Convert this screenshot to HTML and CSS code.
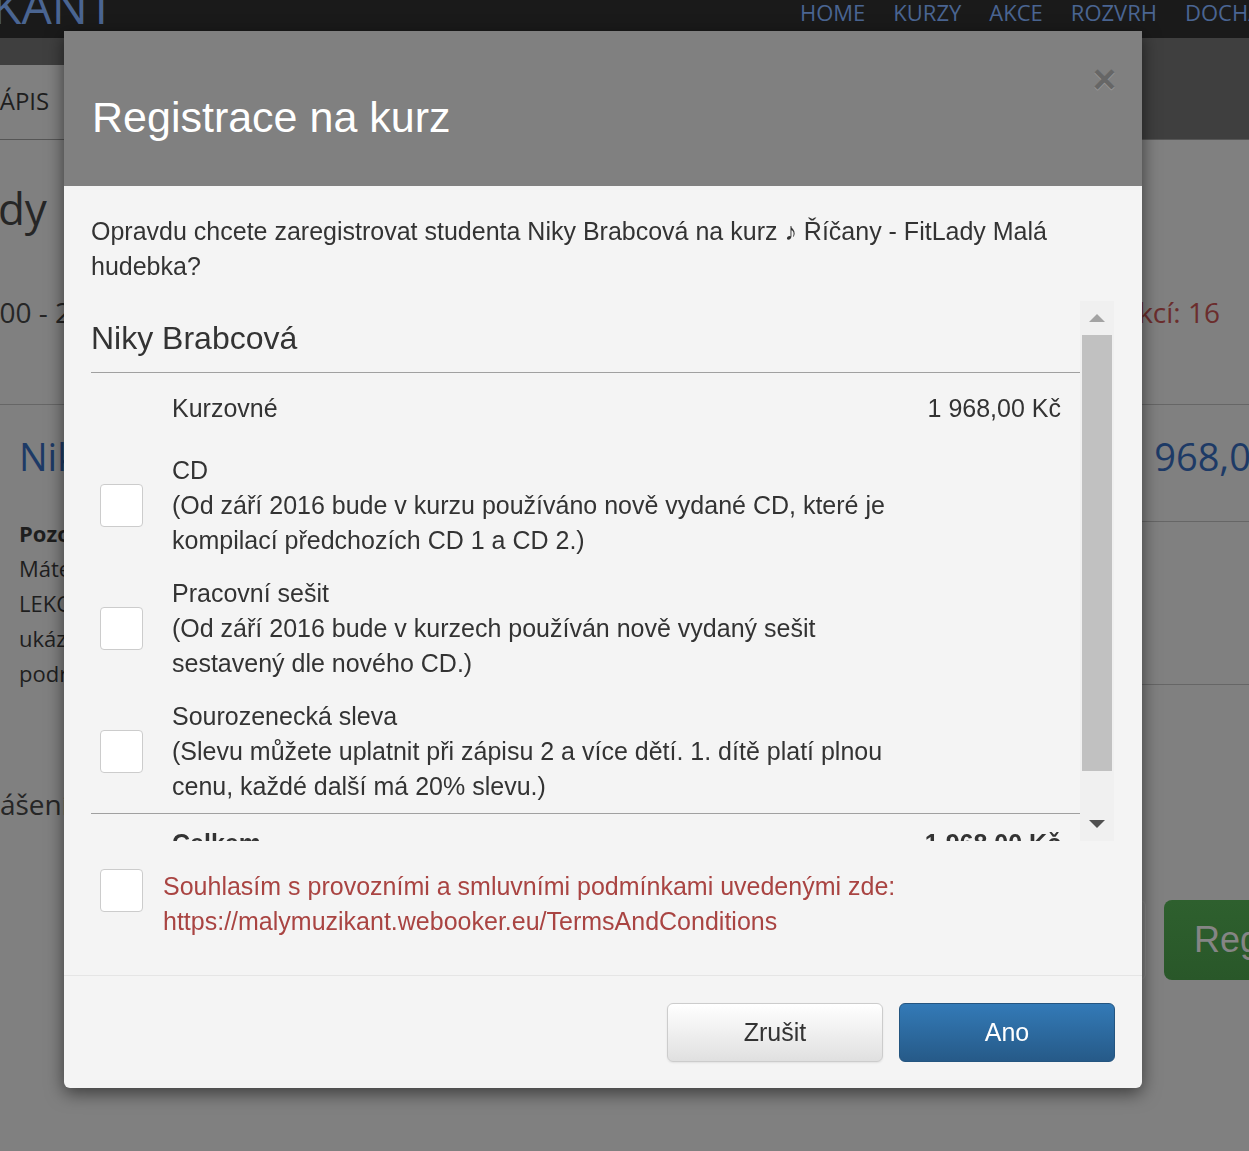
FILE: index.html
```html
<!DOCTYPE html>
<html lang="cs">
<head>
  <meta charset="UTF-8" />
  <title>Registrace na kurz</title>
  <link rel="stylesheet" href="styles.css">
</head>
<body>
  <div class="page">
    <header class="topbar">
      <div class="logo">KANT</div>
      <nav class="mainnav">
        <a>HOME</a>
        <a>KURZY</a>
        <a>AKCE</a>
        <a>ROZVRH</a>
        <a>DOCHÁZKA</a>
      </nav>
    </header>
    <div class="subbar">
      <a class="tab">ZÁPIS</a>
    </div>
    <main class="content">
      <h1 class="course-name">FitLady</h1>
      <div class="course-meta">
        <span class="time">10:00 - 20:00</span>
        <span class="lessons">Počet lekcí: 16</span>
      </div>
      <div class="student-row">
        <span class="student">Niky Brabcová</span>
        <span class="student-price">1 968,00 Kč</span>
      </div>
      <div class="info-row">
        <div class="info">
          <b>Pozor</b><br>
          Máte<br>
          LEKCE<br>
          ukázka<br>
          podrobnosti
        </div>
        <div class="info-side"></div>
      </div>
      <div class="signup-row">
        <span class="signed">přihlášení</span>
      </div>
      <div class="action-row">
        <span class="btn-ghost"></span>
        <span class="btn-success">Registrovat</span>
      </div>
    </main>
  </div>

  <div class="modal">
    <div class="modal-header">
      <h2 class="modal-title">Registrace na kurz</h2>
      <button class="close">×</button>
    </div>

    <div class="modal-body">
      <p class="intro">Opravdu chcete zaregistrovat studenta Niky Brabcová na kurz ♪ Říčany - FitLady Malá hudebka?</p>

      <div class="scroll-box">
        <div class="scroll-view">
          <h3 class="student-name">Niky Brabcová</h3>
          <div class="items">
            <div class="item first">
              <div class="cell-check"></div>
              <div class="cell-text">Kurzovné</div>
              <div class="cell-price">1 968,00 Kč</div>
            </div>
            <div class="item">
              <div class="cell-check"><span class="checkbox"></span></div>
              <div class="cell-text">CD<br>(Od září 2016 bude v kurzu používáno nově vydané CD, které je kompilací předchozích CD 1 a CD 2.)</div>
              <div class="cell-price"></div>
            </div>
            <div class="item">
              <div class="cell-check"><span class="checkbox"></span></div>
              <div class="cell-text">Pracovní sešit<br>(Od září 2016 bude v kurzech používán nově vydaný sešit sestavený dle nového CD.)</div>
              <div class="cell-price"></div>
            </div>
            <div class="item">
              <div class="cell-check"><span class="checkbox"></span></div>
              <div class="cell-text">Sourozenecká sleva<br>(Slevu můžete uplatnit při zápisu 2 a více dětí. 1. dítě platí plnou cenu, každé další má 20% slevu.)</div>
              <div class="cell-price"></div>
            </div>
            <div class="item total">
              <div class="cell-check"></div>
              <div class="cell-text">Celkem</div>
              <div class="cell-price">1 968,00 Kč</div>
            </div>
          </div>
        </div>
        <div class="scrollbar">
          <div class="sb-btn"><span class="arrow-up"></span></div>
          <div class="sb-track"><div class="sb-thumb"></div></div>
          <div class="sb-btn"><span class="arrow-down"></span></div>
        </div>
      </div>

      <div class="terms">
        <span class="checkbox"></span>
        <p>Souhlasím s provozními a smluvními podmínkami uvedenými zde:<br>https://malymuzikant.webooker.eu/TermsAndConditions</p>
      </div>
    </div>

    <div class="modal-footer">
      <button class="btn btn-default">Zrušit</button>
      <button class="btn btn-primary">Ano</button>
    </div>
  </div>
</body>
</html>
```

FILE: styles.css
```css
body {
  margin: 0;
  background: #808080;
  font-family: 'Open Sans', sans-serif;
  overflow: hidden;
  height: 1151px;
}

/* page behind the dialog (already dimmed) */
.topbar {
  display: grid;
  grid-template-columns: 800px 1fr;
  height: 38px;
  background: #1a1a1a;
  overflow: hidden;
  white-space: nowrap;
}
.logo {
  font-size: 48px;
  line-height: 1;
  margin: -18px 0 0 -8px;
  color: #4a6592;
}
.mainnav {
  display: flex;
  gap: 28px;
  padding-top: 1px;
}
.mainnav a {
  font-size: 22px;
  line-height: 1;
  color: #4a6592;
}
.subbar {
  height: 101px;
  background: #3f3f3f;
  border-bottom: 1px solid #555;
  display: flex;
  align-items: flex-end;
}
.tab {
  height: 74px;
  line-height: 72px;
  margin-left: -30px;
  padding: 0 40px 0 16px;
  background: #808080;
  font-size: 24px;
  color: #1e1e1e;
}
.content {
  color: #262626;
}
.course-name {
  margin: 38px 0 0 -99px;
  font-size: 44px;
  font-weight: normal;
  line-height: 60px;
}
.course-meta {
  display: flex;
  justify-content: space-between;
  margin-top: 54px;
  padding: 0 29px 0 0;
  font-size: 28px;
  line-height: 40px;
  height: 112px;
  border-bottom: 1px solid #666;
}
.time {
  margin-left: -40px;
}
.lessons {
  color: #6b2d2d;
}
.student-row {
  display: flex;
  justify-content: space-between;
  padding: 26px 0 0 19px;
  font-size: 38px;
  line-height: 50px;
  color: #1d3a66;
  white-space: nowrap;
  overflow: hidden;
}
.student-price {
  margin-right: -75px;
}
.info-row {
  display: flex;
  margin-top: 24px;
}
.info {
  flex: 1;
  padding: 11px 0 0 19px;
  font-size: 22px;
  line-height: 35px;
  color: #1e1e1e;
}
.info-side {
  width: 107px;
  height: 162px;
  border-top: 1px solid #666;
  border-bottom: 1px solid #666;
  margin-top: 16px;
}
.signed {
  display: block;
  margin: 93px 0 0 -60px;
  font-size: 28px;
  line-height: 40px;
}
.action-row {
  display: flex;
  justify-content: flex-end;
  margin-top: 76px;
  margin-right: -235px;
  gap: 18px;
}
.btn-ghost {
  width: 60px;
  height: 78px;
  border: 1px solid #8a8a8a;
  border-radius: 6px;
}
.btn-success {
  width: 290px;
  height: 80px;
  line-height: 80px;
  padding-left: 30px;
  border-radius: 8px;
  background: linear-gradient(#2e602e, #295729);
  font-family: 'Liberation Sans', Arial, sans-serif;
  font-size: 36px;
  color: #858585;
}

/* dialog */
.modal {
  position: fixed;
  top: 31px;
  left: 64px;
  width: 1078px;
  background: #f4f4f4;
  border-radius: 0 0 6px 6px;
  box-shadow: 0 5px 18px rgba(0,0,0,0.55);
  font-family: 'Liberation Sans', Arial, sans-serif;
  color: #333;
}
.modal-header {
  position: relative;
  background: #808080;
  padding: 60px 28px 42px;
}
.modal-title {
  margin: 0;
  font-size: 43px;
  font-weight: normal;
  line-height: 53px;
  color: #fff;
}
.close {
  position: absolute;
  top: 28px;
  right: 26px;
  padding: 0;
  border: none;
  background: none;
  font-family: 'Liberation Sans', Arial, sans-serif;
  font-size: 40px;
  font-weight: bold;
  line-height: 1;
  color: #000;
  opacity: 0.2;
  text-shadow: 0 1px 0 #fff;
}
.modal-body {
  padding: 28px 28px 36px 27px;
}
.intro {
  margin: 0;
  font-size: 25px;
  line-height: 35px;
}
.scroll-box {
  display: flex;
  height: 540px;
  margin-top: 17px;
}
.scroll-view {
  flex: 1;
  overflow: hidden;
}
.student-name {
  margin: 19px 0 0;
  padding-bottom: 16px;
  font-size: 32px;
  font-weight: normal;
  line-height: 36px;
  border-bottom: 1px solid #a0a0a0;
}
.item {
  display: grid;
  grid-template-columns: 81px 1fr 172px;
  align-items: center;
  padding: 9px 0;
  font-size: 25px;
  line-height: 35px;
}
.item.first {
  padding: 18px 0;
}
.item.total {
  padding-top: 12px;
  border-top: 1px solid #a0a0a0;
  font-weight: bold;
}
.cell-check {
  padding-left: 9px;
}
.cell-price {
  text-align: right;
  padding-right: 19px;
}
.checkbox {
  display: block;
  width: 41px;
  height: 41px;
  background: #fff;
  border: 1px solid #ccc;
  border-radius: 4px;
}
.scrollbar {
  width: 34px;
  background: #f0f0f0;
  display: flex;
  flex-direction: column;
}
.sb-btn {
  height: 34px;
  display: flex;
  justify-content: center;
  align-items: center;
}
.sb-track {
  flex: 1;
  padding: 0 2px 34px;
}
.sb-thumb {
  height: 436px;
  background: #c1c1c1;
}
.arrow-up {
  border-left: 8px solid transparent;
  border-right: 8px solid transparent;
  border-bottom: 8px solid #a3a3a3;
}
.arrow-down {
  border-left: 8px solid transparent;
  border-right: 8px solid transparent;
  border-top: 8px solid #505050;
}
.terms {
  display: flex;
  gap: 20px;
  align-items: flex-start;
  margin-top: 28px;
  padding-left: 9px;
}
.terms p {
  margin: 0;
  font-size: 25px;
  line-height: 35px;
  color: #a94442;
}
.modal-footer {
  display: flex;
  justify-content: flex-end;
  gap: 16px;
  padding: 27px 27px 26px;
  border-top: 1px solid #e5e5e5;
}
.btn {
  width: 216px;
  height: 59px;
  border-radius: 6px;
  font-family: 'Liberation Sans', Arial, sans-serif;
  font-size: 25px;
  cursor: pointer;
}
.btn-default {
  background: linear-gradient(#fff, #e0e0e0);
  border: 1px solid #ccc;
  color: #333;
  box-shadow: 0 1px 2px rgba(0,0,0,0.08);
}
.btn-primary {
  background: linear-gradient(#337ab7, #265a88);
  border: 1px solid #245580;
  color: #fff;
}
```
